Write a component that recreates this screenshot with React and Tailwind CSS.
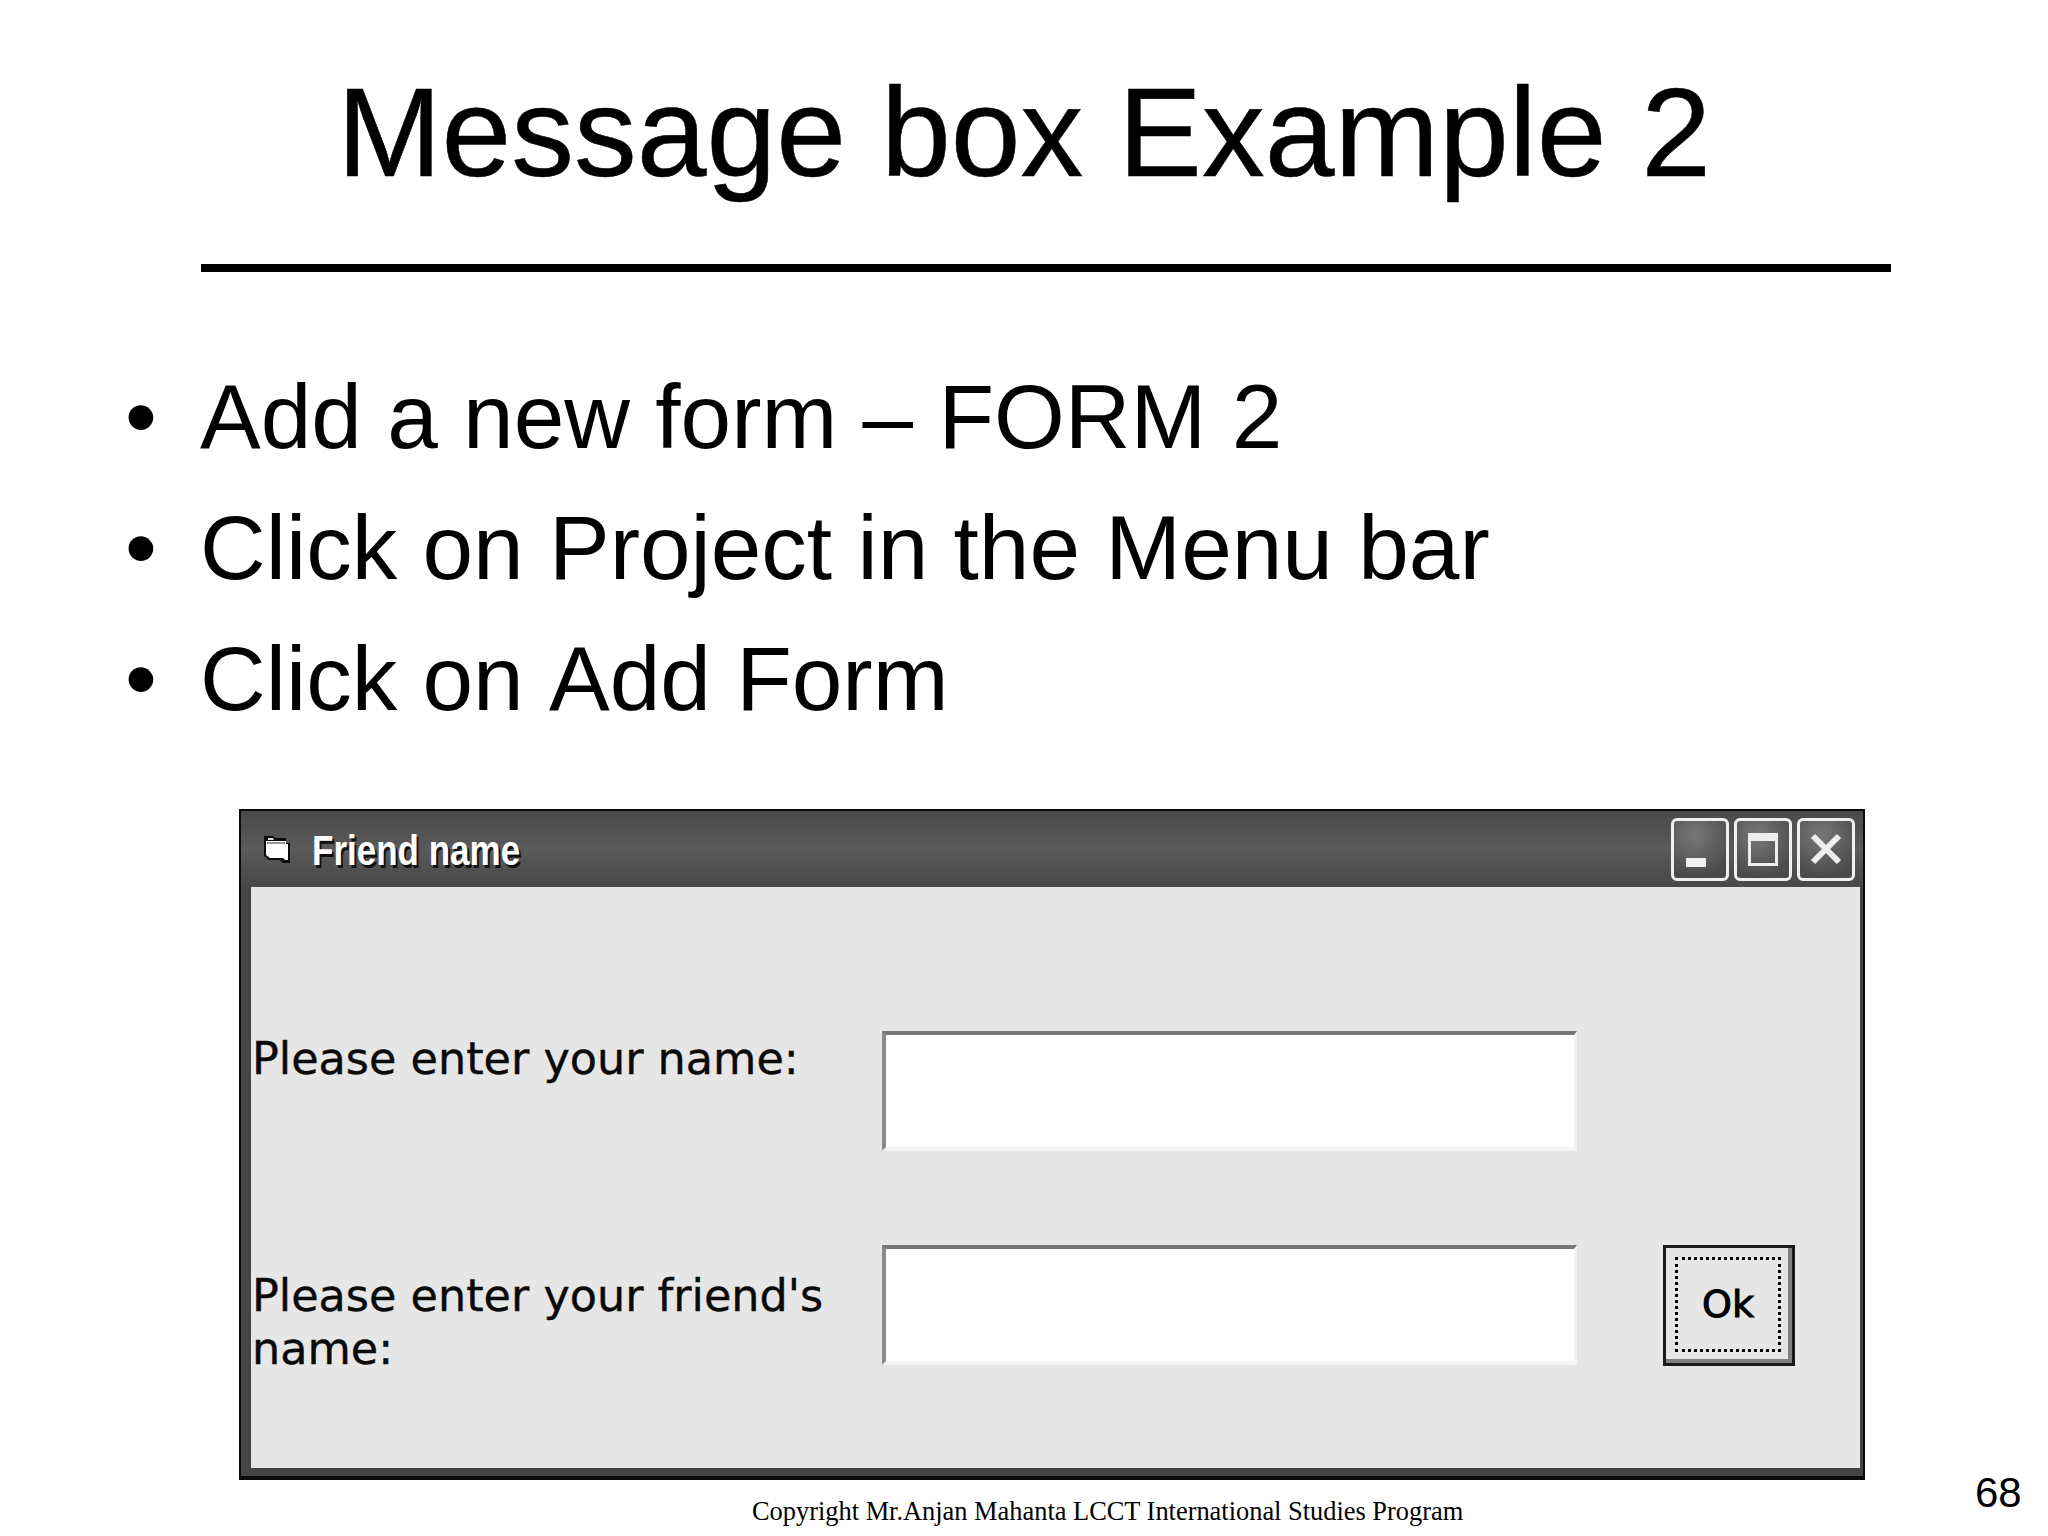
import React from 'react';

const bullets = ['Add a new form – FORM 2', 'Click on Project in the Menu bar', 'Click on Add Form'];

function FolderIcon() {
  return (
    <svg width="28" height="31" viewBox="0 0 28 31" className="shrink-0">
      <path d="M1 2h9l2 2h11v5h4v20h-7l-3-3H6l-5-4z" fill="#0c0c0c" />
      <path d="M3 7h20v3h2v16h-3l-2-2H7l-4-3z" fill="#fff" />
      <path d="M5 4h5l1 2H5z" fill="#ddd" />
      <path d="M4 9h18" stroke="#777" strokeWidth="1.5" />
    </svg>
  );
}

function WinButton({ children }) {
  return (
    <div className="w-[58px] h-[63px] rounded-[6px] border-[3px] border-[#f0f0f0] bg-[radial-gradient(circle_at_40%_25%,#787878,#4a4a4a_80%)] flex items-center justify-center">
      {children}
    </div>
  );
}

function FormRow({ children, label, className }) {
  return (
    <div className="flex items-start h-[120px]">
      <p className={`w-[631px] pl-px text-[44.5px] leading-[53px] text-[#0a0a0a] font-['DejaVu_Sans',sans-serif] [-webkit-text-stroke:0.4px_#0a0a0a] ${className}`}>{label}</p>
      <div className="w-[695px] h-[120px] bg-white border-t-[4px] border-l-[4px] border-t-[#777] border-l-[#8a8a8a] border-b-[4px] border-r-[3px] border-b-[#f4f4f4] border-r-[#f4f4f4]" />
      {children}
    </div>
  );
}

export default function App() {
  return (
    <div className="w-[2048px] h-[1536px] overflow-hidden bg-white text-black font-['Liberation_Sans',Arial,sans-serif]">
      <h1 className="pt-[58px] text-center text-[125.5px] leading-[150px] font-normal [-webkit-text-stroke:0.5px_black]">Message box Example 2</h1>
      <div className="ml-[201px] mt-[56px] w-[1690px] h-[8px] bg-black" />

      <ul className="mt-[79px] pl-[125px]">
        {bullets.map((text) => (
          <li key={text} className="flex text-[91px] leading-[131px] [font-kerning:none]">
            <span className="w-[75px] shrink-0">•</span>
            {text}
          </li>
        ))}
      </ul>

      <div className="ml-[239px] mt-[65px] w-[1626px] h-[671px] flex flex-col bg-[#454545] border-[2px] border-[#0a0a0a] border-b-[4px]">
        <div className="h-[76px] shrink-0 flex items-center pl-[22px] pr-[8px] bg-gradient-to-b from-[#4a4a4a] via-[#5a5a5a] to-[#484848]">
          <FolderIcon />
          <span className="ml-[21px] mt-[4px] text-[35px] font-bold text-white scale-y-[1.2] [text-shadow:2px_2px_0_#111]">Friend name</span>
          <div className="ml-auto flex gap-[5px]">
            <WinButton><div className="mt-[26px] -ml-[8px] w-[20px] h-[9px] bg-[#f2f2f2]" /></WinButton>
            <WinButton><div className="w-[30px] h-[33px] border-[3px] border-t-[8px] border-[#eeeeee]" /></WinButton>
            <WinButton>
              <svg width="32" height="32" viewBox="0 0 32 32"><path d="M3 3l26 26M29 3L3 29" stroke="#eee" strokeWidth="6" /></svg>
            </WinButton>
          </div>
        </div>

        <div className="flex-1 ml-[10px] mr-[3px] mb-[8px] bg-[#e6e6e6] pt-[144px]">
          <div className="flex flex-col gap-[94px]">
            <FormRow label="Please enter your name:" className="pt-[1px]" />
            <FormRow label={<>Please enter your friend's<br />name:</>} className="pt-[24px]">
              <button className="ml-[86px] w-[132px] h-[121px] border-[3px] border-[#1a1a1a] shadow-[inset_-4px_-4px_0_#808080] p-[9px] pb-[11px] pr-[11px]">
                <span className="flex h-full items-center justify-center border-[3px] border-dotted border-black text-[38px] font-['DejaVu_Sans',sans-serif] [-webkit-text-stroke:1px_black]">Ok</span>
              </button>
            </FormRow>
          </div>
        </div>
      </div>

      <div className="relative h-[56px] pl-[752px] pt-[15px] font-['Liberation_Serif',serif] text-[26.4px] leading-[32px]">
        Copyright Mr.Anjan Mahanta LCCT International Studies Program
        <span className="absolute left-[1975px] top-[-12px] font-['Liberation_Sans',sans-serif] text-[42px] leading-[50px]">68</span>
      </div>
    </div>
  );
}
